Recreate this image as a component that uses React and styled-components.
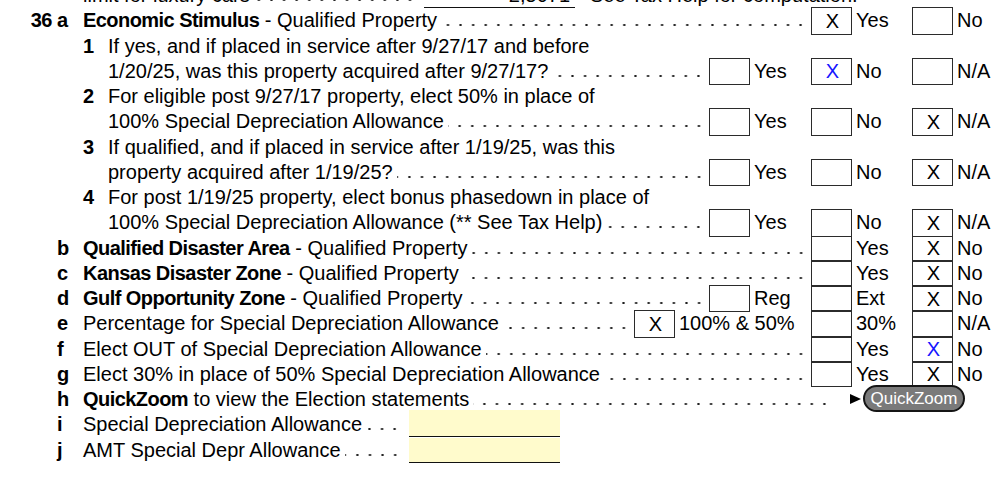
import React from "react";
import styled, { createGlobalStyle } from "styled-components";

const ROW = 25.25;

const GlobalStyle = createGlobalStyle`
  html, body {
    margin: 0;
    padding: 0;
    background: #fff;
    overflow: hidden;
  }
  body {
    font-family: "Liberation Sans", Arial, Helvetica, sans-serif;
    font-size: 20px;
    color: #000;
  }
`;

const Sheet = styled.div`
  width: 999px;
  margin-top: -17px;
  display: flex;
  flex-direction: column;
`;

const Row = styled.div`
  display: flex;
  align-items: stretch;
  height: ${ROW}px;
  line-height: ${ROW}px;
  white-space: nowrap;
`;

const Num = styled.div`
  width: 57px;
  padding-right: 5px;
  box-sizing: border-box;
  text-align: right;
  font-weight: 700;
  letter-spacing: -0.5px;
`;

const Letter = styled.div`
  width: ${(p) => p.$w || 26}px;
  font-weight: 700;
`;

const Body = styled.div`
  flex: 1;
  min-width: 0;
  display: flex;
`;

const Text = styled.span`
  white-space: nowrap;
`;

const B = styled.b`
  font-weight: 700;
  letter-spacing: -0.55px;
`;

const Leader = styled.span`
  flex: 1;
  margin: 0 ${(p) => (p.$end == null ? 4 : p.$end)}px 0 4px;
  background-image: radial-gradient(circle, #1e1e1e 0, #1e1e1e 0.9px, transparent 1.4px);
  background-size: 12.6px 4px;
  background-repeat: repeat-x;
  background-position: right 0 top 15px;
`;

const Choice = styled.div`
  width: ${(p) => p.$w}px;
  display: flex;
  align-items: stretch;
`;

const Box = styled.div`
  width: 41px;
  flex: none;
  box-sizing: border-box;
  border: 1px solid #2b2b2b;
  height: ${(p) => (p.$stacked ? "100%" : "calc(100% + 2px)")};
  margin-top: ${(p) => (p.$stacked ? 0 : -1)}px;
  display: flex;
  align-items: center;
  justify-content: center;
  color: ${(p) => (p.$blue ? "#1515ff" : "#000")};
  line-height: 1;
  padding-left: 2px;
`;

const Label = styled.span`
  padding-left: 4px;
`;

const Field = styled.div`
  width: 151px;
  box-sizing: border-box;
  background: ${(p) => (p.$plain ? "transparent" : "#fffbcc")};
  border-bottom: 1px solid #111;
  margin-top: ${(p) => (p.$lift ? -2 : 0)}px;
  height: ${(p) => (p.$lift ? "calc(100% + 1px)" : "100%")};
  text-align: right;
  padding-right: 5px;
  margin-right: ${(p) => p.$after || 0}px;
`;

const Note = styled.div`
  width: 424px;
  padding-left: 15px;
  box-sizing: border-box;
`;

const ZoomCell = styled.div`
  width: 149px;
  display: flex;
  align-items: center;
  height: 27px;
  margin-top: -2px;
`;

const Arrow = styled.span`
  width: 0;
  height: 0;
  border-left: 11px solid #000;
  border-top: 5px solid transparent;
  border-bottom: 5px solid transparent;
  margin-right: 2px;
`;

const ZoomButton = styled.button`
  width: 102px;
  height: 27px;
  box-sizing: border-box;
  padding: 0;
  border: 2px solid #151515;
  border-radius: 14px;
  background: #7a7a7a;
  color: #fff;
  font-family: "Liberation Sans", Arial, Helvetica, sans-serif;
  font-size: 17px;
  line-height: 22px;
  text-align: center;
  cursor: pointer;
`;

const COLS = { A: 102, B: 101, C: 87 };

function Choices({ items }) {
  return items.map((c, i) => (
    <Choice key={i} $w={c.w || COLS[c.col]}>
      <Box $stacked={c.stacked} $blue={c.blue}>
        {c.mark ? "X" : ""}
      </Box>
      <Label>{c.label}</Label>
    </Choice>
  ));
}

const abc = (a, b, c) => [
  { col: "A", label: "Yes", mark: a === "x" },
  { col: "B", label: "No", mark: b !== "", blue: b === "blue" },
  { col: "C", label: "N/A", mark: c === "x" },
];

const stackedYesNo = (blue) => [
  { col: "B", label: "Yes", stacked: true },
  { col: "C", label: "No", stacked: true, mark: true, blue },
];

function Head({ num, letter, sub }) {
  return (
    <>
      <Num>{num}</Num>
      <Letter>{letter}</Letter>
      {sub !== undefined && <Letter $w={25}>{sub}</Letter>}
    </>
  );
}

export default function App() {
  return (
    <>
      <GlobalStyle />
      <Sheet>
        <Row>
          <Head />
          <Body>
            <Text>limit for luxury cars</Text>
            <Leader $end={8} />
          </Body>
          <Field $plain>2,5071</Field>
          <Note>See Tax Help for computation.</Note>
        </Row>

        <Row>
          <Head num="36" letter="a" />
          <Body>
            <Text>
              <B>Economic Stimulus</B> - Qualified Property
            </Text>
            <Leader />
          </Body>
          <Choices
            items={[
              { col: "B", label: "Yes", mark: true },
              { col: "C", label: "No" },
            ]}
          />
        </Row>

        <Row>
          <Head sub="1" />
          <Body>
            <Text>If yes, and if placed in service after 9/27/17 and before</Text>
          </Body>
        </Row>
        <Row>
          <Head sub="" />
          <Body>
            <Text>1/20/25, was this property acquired after 9/27/17?</Text>
            <Leader />
          </Body>
          <Choices items={abc("", "blue", "")} />
        </Row>

        <Row>
          <Head sub="2" />
          <Body>
            <Text>For eligible post 9/27/17 property, elect 50% in place of</Text>
          </Body>
        </Row>
        <Row>
          <Head sub="" />
          <Body>
            <Text>100% Special Depreciation Allowance</Text>
            <Leader />
          </Body>
          <Choices items={abc("", "", "x")} />
        </Row>

        <Row>
          <Head sub="3" />
          <Body>
            <Text>If qualified, and if placed in service after 1/19/25, was this</Text>
          </Body>
        </Row>
        <Row>
          <Head sub="" />
          <Body>
            <Text>property acquired after 1/19/25?</Text>
            <Leader />
          </Body>
          <Choices items={abc("", "", "x")} />
        </Row>

        <Row>
          <Head sub="4" />
          <Body>
            <Text>For post 1/19/25 property, elect bonus phasedown in place of</Text>
          </Body>
        </Row>
        <Row>
          <Head sub="" />
          <Body>
            <Text>100% Special Depreciation Allowance (** See Tax Help)</Text>
            <Leader />
          </Body>
          <Choices items={abc("", "", "x")} />
        </Row>

        <Row>
          <Head letter="b" />
          <Body>
            <Text>
              <B>Qualified Disaster Area</B> - Qualified Property
            </Text>
            <Leader />
          </Body>
          <Choices items={stackedYesNo(false)} />
        </Row>
        <Row>
          <Head letter="c" />
          <Body>
            <Text>
              <B>Kansas Disaster Zone</B> - Qualified Property
            </Text>
            <Leader />
          </Body>
          <Choices items={stackedYesNo(false)} />
        </Row>
        <Row>
          <Head letter="d" />
          <Body>
            <Text>
              <B>Gulf Opportunity Zone</B> - Qualified Property
            </Text>
            <Leader />
          </Body>
          <Choices
            items={[
              { col: "A", label: "Reg" },
              { col: "B", label: "Ext", stacked: true },
              { col: "C", label: "No", stacked: true, mark: true },
            ]}
          />
        </Row>
        <Row>
          <Head letter="e" />
          <Body>
            <Text>Percentage for Special Depreciation Allowance</Text>
            <Leader />
          </Body>
          <Choices
            items={[
              { w: 177, label: "100% & 50%", mark: true },
              { col: "B", label: "30%", stacked: true },
              { col: "C", label: "N/A", stacked: true },
            ]}
          />
        </Row>
        <Row>
          <Head letter="f" />
          <Body>
            <Text>Elect OUT of Special Depreciation Allowance</Text>
            <Leader />
          </Body>
          <Choices items={stackedYesNo(true)} />
        </Row>
        <Row>
          <Head letter="g" />
          <Body>
            <Text>Elect 30% in place of 50% Special Depreciation Allowance</Text>
            <Leader />
          </Body>
          <Choices items={stackedYesNo(false)} />
        </Row>

        <Row>
          <Head letter="h" />
          <Body>
            <Text>
              <B>QuickZoom</B> to view the Election statements
            </Text>
            <Leader $end={19} />
          </Body>
          <ZoomCell>
            <Arrow />
            <ZoomButton type="button">QuickZoom</ZoomButton>
          </ZoomCell>
        </Row>

        <Row>
          <Head letter="i" />
          <Body>
            <Text>Special Depreciation Allowance</Text>
            <Leader $end={8} />
          </Body>
          <Field $lift $after={439} />
        </Row>
        <Row>
          <Head letter="j" />
          <Body>
            <Text>AMT Special Depr Allowance</Text>
            <Leader $end={8} />
          </Body>
          <Field $after={439} />
        </Row>
      </Sheet>
    </>
  );
}
